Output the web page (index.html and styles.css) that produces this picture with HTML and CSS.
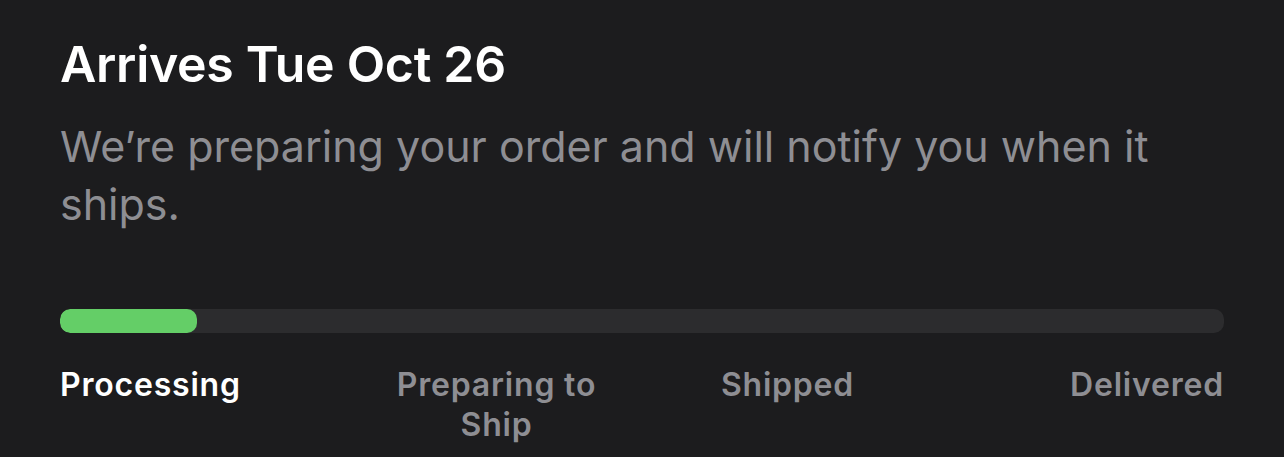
FILE: index.html
```html
<!DOCTYPE html>
<html>
<head>
    <title>Order Status</title>
    <link rel="stylesheet" href="styles.css">
</head>
<body>
    <div class="card">
        <h1 class="title">Arrives Tue Oct 26</h1>
        <p class="subtitle">We’re preparing your order and will notify you when it ships.</p>

        <div class="track">
            <div class="fill" style="width: 11.8%"></div>
        </div>

        <div class="steps">
            <div class="step active">Processing</div>
            <div class="step">Preparing to Ship</div>
            <div class="step">Shipped</div>
            <div class="step">Delivered</div>
        </div>
    </div>
</body>
</html>
```

FILE: styles.css
```css
html, body { margin: 0; padding: 0; background: #1c1c1e; }
body { font-family: Inter, "Noto Sans", sans-serif; color: #fff; }
.card { padding: 34px 60px 0 60px; }
.title { margin: 0; font-size: 50px; font-weight: 600; line-height: 60px; letter-spacing: -0.3px; }
.subtitle { margin: 23px 0 0 0; font-size: 43px; font-weight: 400; line-height: 58px; color: #8e8e93; max-width: 1120px; }
.track { margin-top: 76px; height: 24px; background: #2c2c2e; border-radius: 10px; overflow: hidden; }
.fill { height: 100%; background: #64ce67; border-radius: 10px; }
.steps { display: grid; grid-template-columns: repeat(4, 1fr); margin-top: 32px; }
.step { font-size: 32px; font-weight: 600; line-height: 40px; color: #8e8e93; text-align: center; letter-spacing: 0.8px; padding: 0 40px; }
.step:first-child { text-align: left; padding: 0; }
.step:last-child { text-align: right; padding: 0; }
.step.active { color: #fff; }
```
